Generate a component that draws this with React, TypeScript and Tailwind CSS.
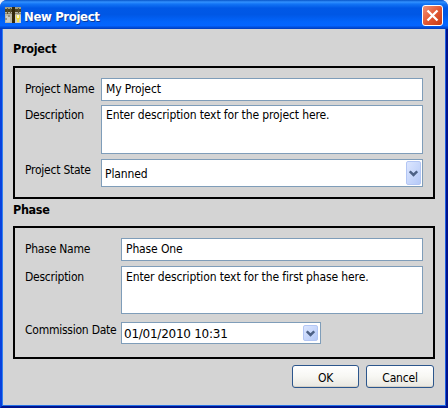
import type { ReactNode } from "react";

function AppIcon() {
  return (
    <svg width="16" height="16" viewBox="0 0 16 16" shapeRendering="crispEdges" className="shrink-0">
      <path d="M0 0h16v16H0z" fill="#b9b7a6" />
      <path d="M0 0h16v2H0z" fill="#a19e84" />
      <path d="M0 6h16v1H0z" fill="#8f8a70" />
      <path d="M1 9h4v6H1zM10 8h6v8h-6z" fill="#cfcec4" />
      <path d="M0 2h16v3H0z" fill="#4b4423" />
      <path d="M7 0h3v16H7z" fill="#33290b" />
      <path d="M2 1h1v6H2zM5 1h1v5H5zM13 1h1v5h-1z" fill="#5b5130" />
      <path d="M0 11h2v2H0zM3 8h2v2H3z" fill="#96927f" />
      <path d="M11 8h4v4h-1v3h-2v-3h-1z" fill="#f0df4a" />
      <path d="M12 8h2v3h-2z" fill="#fffbd0" />
    </svg>
  );
}

function Chevron() {
  return (
    <svg width="9" height="7" viewBox="0 0 9 7" fill="none">
      <path d="M.8 1.3 4.5 4.9 8.2 1.3" stroke="#4d6185" strokeWidth="2.5" />
    </svg>
  );
}

function Label({ children, className }: { children: ReactNode; className: string }) {
  return <label className={`shrink-0 whitespace-nowrap leading-4 tracking-[-0.24px] ${className}`}>{children}</label>;
}

const field = "border border-[#7f9db9] bg-white whitespace-nowrap leading-4 tracking-[-0.12px] text-black";
const arrow = "flex w-[15px] items-center justify-center rounded-[2px] border border-[#b3c6f4] bg-linear-to-br from-[#dce6ff] to-[#b5c9f7]";
const button = "flex h-[23px] items-center justify-center rounded-[3px] border border-[#2c568c] bg-linear-to-b from-white via-[#f7f7f3] to-[#e8e7e0] pt-[2px] tracking-[-0.2px] shadow-[inset_0_-1px_0_#d6d1c7]";

export default function App() {
  return (
    <div className="h-[408px] w-[448px] overflow-hidden bg-[#e8f0fb] font-['DejaVu_Sans_Condensed','DejaVu_Sans',sans-serif] text-[12px] text-black">
      <div className="flex h-full flex-col overflow-hidden rounded-t-[7px] bg-[#0831d9]">
        <header className="flex h-[29px] shrink-0 items-center bg-[linear-gradient(180deg,#0755c8_0%,#3291ff_7%,#1274f5_14%,#0058e6_28%,#0057e5_50%,#0264fb_75%,#0465ff_88%,#0044cc_97%,#003dba_100%)] pt-px pr-[5px] pl-[5px]">
          <AppIcon />
          <h1 className="ml-[3px] pt-[3px] text-[13px] leading-4 font-bold tracking-[-0.36px] whitespace-nowrap text-white [text-shadow:1px_1px_#0b3a9b]">New Project</h1>
          <button aria-label="Close" className="mt-px ml-auto flex size-[21px] items-center justify-center rounded-[3px] border border-white bg-linear-to-br from-[#f09177] via-[#e25834] to-[#c63a12]">
            <svg width="13" height="13" viewBox="0 0 13 13" className="shrink-0"><path d="m1.5 1.5 10 10M11.5 1.5l-10 10" stroke="white" strokeWidth="2.3" /></svg>
          </button>
        </header>
        <div className="flex min-h-0 grow border-r-2 border-b-2 border-l-2 border-r-[#00138c] border-b-[#00138c] border-l-[#0840dc]">
          <main className="grow border-r border-b border-l border-r-[#1d5ce0] border-b-[#2470e8] border-l-[#2f80f0] bg-[#d4d4d4] pr-[10px] pl-[10px]">
            <h2 className="flex h-[37px] items-center pt-[4px] text-[12.5px] font-bold tracking-[-0.25px]">Project</h2>
            <section className="flex h-[133px] flex-col border-2 border-black pt-[10px] pr-[10px] pl-[10px]">
              <div className="flex h-[27px]">
                <Label className="w-[76px] pt-[3px]">Project Name</Label>
                <div className={`h-[23px] grow pt-[2px] pl-[4px] ${field}`}>My Project</div>
              </div>
              <div className="flex h-[54px]">
                <Label className="w-[76px] pt-[2px]">Description</Label>
                <div className={`h-[49px] grow pt-px pl-[4px] ${field}`}>Enter description text for the project here.</div>
              </div>
              <div className="flex h-[28px]">
                <Label className="w-[76px] pt-[3px]">Project State</Label>
                <div className={`flex grow justify-between py-px pr-px pl-[3px] ${field}`}>
                  <span className="pt-[5px]">Planned</span>
                  <span className={arrow}><Chevron /></span>
                </div>
              </div>
            </section>
            <h2 className="flex h-[27px] items-center pb-[5px] text-[12.5px] font-bold tracking-[-0.35px]">Phase</h2>
            <section className="flex h-[133px] flex-col border-2 border-black pt-[10px] pr-[10px] pl-[10px]">
              <div className="flex h-[28px]">
                <Label className="w-[96px] pt-[3px]">Phase Name</Label>
                <div className={`h-[23px] grow pt-[2px] pl-[4px] ${field}`}>Phase One</div>
              </div>
              <div className="flex h-[56px]">
                <Label className="w-[96px] pt-[3px]">Description</Label>
                <div className={`h-[48px] grow pt-[2px] pl-[4px] ${field}`}>Enter description text for the first phase here.</div>
              </div>
              <div className="flex h-[22px]">
                <Label className="w-[96px]">Commission Date</Label>
                <div className={`flex w-[200px] justify-between pt-[2px] pr-[2px] pb-[2px] pl-[2px] ${field}`}>
                  <span className="pt-px font-['DejaVu_Sans',sans-serif] text-[12px] tracking-[-0.25px]">01/01/2010 10:31</span>
                  <span className={arrow}><Chevron /></span>
                </div>
              </div>
            </section>
            <footer className="flex justify-end gap-[7px] pt-[6px] pr-px">
              <button className={`w-[67px] ${button}`}>OK</button>
              <button className={`w-[68px] ${button}`}>Cancel</button>
            </footer>
          </main>
        </div>
      </div>
    </div>
  );
}
